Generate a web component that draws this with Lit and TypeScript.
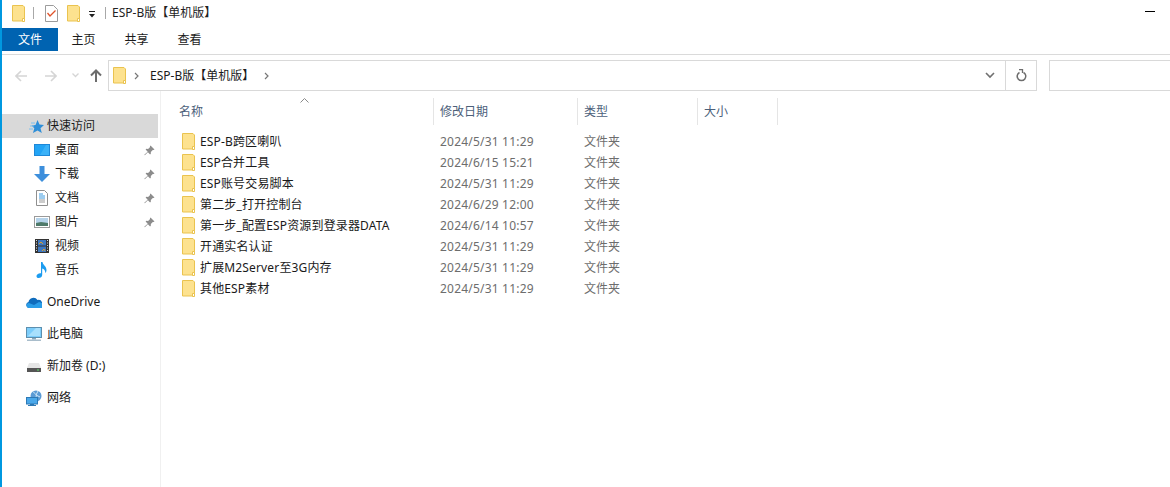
import { LitElement, html, css, svg } from "lit";
import { customElement } from "lit/decorators.js";

const folder = () => html`<svg class="ic" width="13" height="17" viewBox="0 0 13 17"><path d="M.5.5h10.500l1.500 1.500v14H.5z" fill="#fde28f" stroke="#eac34f"/><path d="M10.500 16.500v-3h2v3z" fill="#fff" stroke="#eac34f"/></svg>`;
const pin = html`<svg width="11" height="11" viewBox="0 0 11 11"><path d="M6.500.5l4 4-1 .6-.7-.2-2 2 .1 1.700-.8.800-2.200-2.200L.8 10.300.3 9.800l3.400-3.100-2.100-2.100.8-.8 1.700.1 2-2-.2-.7z" fill="#8c8c8c"/></svg>`;

const files = [
  ["ESP-B跨区喇叭", "2024/5/31 11:29"],
  ["ESP合并工具", "2024/6/15 15:21"],
  ["ESP账号交易脚本", "2024/5/31 11:29"],
  ["第二步_打开控制台", "2024/6/29 12:00"],
  ["第一步_配置ESP资源到登录器DATA", "2024/6/14 10:57"],
  ["开通实名认证", "2024/5/31 11:29"],
  ["扩展M2Server至3G内存", "2024/5/31 11:29"],
  ["其他ESP素材", "2024/5/31 11:29"],
];

const icons: Record<string, any> = {
  star: svg`<path d="M9.500 2l2 4.500 4.500.5-3.500 3.200 1.300 4.800-4.300-2.600L5 15l1.300-4.800L3.500 7.500l4-.5z" fill="#2f8fd8"/><path d="M2 8h4M1 11h4M3 5h4" stroke="#7cc0ee"/>`,
  desk: svg`<rect x="0" y="2" width="16" height="12" fill="#1e88d8"/><rect x="1" y="3" width="14" height="10" fill="#22a4f5"/><path d="M6 13l6-10h3v10z" fill="#3bb2f8"/>`,
  down: svg`<path d="M5.500 0h5v8H16l-8 8-8-8h5.500z" fill="#3d8fdc"/>`,
  doc: svg`<path d="M2.500 .5h8l3 3v12h-11z" fill="#fff" stroke="#8f8f8f"/><path d="M5 4h4M5 6h6M5 8h6" stroke="#3a9ae0"/><path d="M5 10h6M5 12h6" stroke="#9a9a9a"/>`,
  pic: svg`<rect x=".5" y="2.500" width="15" height="11" fill="#fff" stroke="#9a9a9a"/><rect x="2" y="4" width="12" height="8" fill="#b5d3ea"/><path d="M2 9l5-1 7 1v3H2z" fill="#4f7a6a"/>`,
  vid: svg`<rect x="1" y="1" width="14" height="14" fill="#333"/><rect x="4" y="2" width="8" height="5.500" fill="#3f78c0"/><rect x="4" y="8.500" width="8" height="5.500" fill="#3f78c0"/><path d="M5 6l2-2 2 2M8 13l2-2 1 2" stroke="#d8a030" fill="none"/><path d="M2 2.500h1M2 5h1M2 7.500h1M2 10h1M2 12.500h1M13 2.500h1M13 5h1M13 7.500h1M13 10h1M13 12.500h1" stroke="#ddd"/>`,
  music: svg`<path d="M7 0h1.500c.3 3 4 4 4 8 0 1.500-.6 2.500-1.300 3 .3-2.500-1.200-4-3-4.500V13c0 1.800-1.700 3-3.500 3-1.500 0-2.200-.8-2.200-1.800C2.500 12.500 4.500 11 7 11.300z" fill="#1c9cf0"/>`,
  cloud: svg`<path d="M3 14a3 3 0 0 1-.5-5.900A5 5 0 0 1 11.500 6a3.800 3.800 0 0 1 4.500 2.300A3 3 0 0 1 16 14z" fill="#0f6cbd"/><path d="M3 14a2.500 2.500 0 0 1 0-5l5 2 5-3 3 1a3 3 0 0 1 0 5z" fill="#2a9de8"/>`,
  pc: svg`<rect x=".5" y="1.500" width="15" height="10" fill="#7ccdfb" stroke="#5d8fae"/><path d="M2 10l8-8h4v8z" fill="#a8e0fd"/><rect x="6" y="12" width="4" height="1.500" fill="#8aa8bc"/><rect x="1" y="13.500" width="14" height="1.500" fill="#a9bdcb"/>`,
  disk: svg`<path d="M3 5h10l2 5H1z" fill="#e6e6e6"/><rect x="1" y="10" width="14" height="4" fill="#555"/><rect x="11" y="11.500" width="2" height="1" fill="#5fe06a"/>`,
  net: svg`<circle cx="10" cy="6" r="5.500" fill="#5b9bd5"/><path d="M7 2c2 1 4 3 3 5M12 1l-2 4 4 2" stroke="#cfe6f6" fill="none"/><rect x=".5" y="7.500" width="11" height="6.500" fill="#4aa8ea" stroke="#2d79b5"/><rect x="4" y="14" width="4" height="1" fill="#2d79b5"/><rect x="2" y="15" width="8" height="1" fill="#2d79b5"/>`,
};
const nav = (k: string) => html`<svg class="nic" width="16" height="16" viewBox="0 0 16 16">${icons[k]}</svg>`;

@customElement("app-root")
export class AppRoot extends LitElement {
  static styles = css`
    :host {
      display: flex;
      flex-direction: column;
      height: 487px;
      width: 1170px;
      box-sizing: border-box;
      border-left: 2px solid #0098e0;
      background: #fff;
      overflow: hidden;
      font: 12px/16px "Noto Sans", "Noto Sans CJK SC", sans-serif;
      color: #1a1a1a;
    }
    svg { display: block; flex: none; }
    .title { height: 27px; display: flex; align-items: center; padding: 0 15px 1px 10px; box-sizing: border-box; }
    .vsep { width: 1px; height: 12px; background: #a8a8a8; }
    .vsep.a { margin: 0 11px 0 8px; }
    .chk { margin-right: 9px; }
    .qa { margin: 3px 9px 0 8px; }
    .title .t { margin-left: 6px; color: #222; }
    .min { margin-left: auto; width: 10px; height: 1px; background: #000; margin-top: -3px; }
    .tabs { display: flex; height: 24px; border-bottom: 1px solid #dadada; padding-bottom: 3px; }
    .tab { width: 53px; height: 23px; display: flex; align-items: center; justify-content: center; margin-top: 1px; padding-right: 2px; box-sizing: border-box; }
    .tab.file { width: 56px; padding-right: 0; background: #0063b1; color: #fff; }
    .addr { display: flex; align-items: center; height: 31px; margin-top: 5px; padding-left: 106px; position: relative; }
    .navbtns { position: absolute; left: 13px; top: 0; bottom: 0; display: flex; align-items: center; }
    .fwd { margin-left: 18px; }
    .dn { margin-left: 15px; }
    .up { margin-left: 11px; }
    .box { flex: none; width: 929px; height: 31px; box-sizing: border-box; border: 1px solid #d9d9d9; display: flex; align-items: center; }
    .crumb { margin-left: 4px; display: flex; align-items: center; flex: 1; }
    .c1 { margin: 0 8px; }
    .c2 { margin-left: 10px; }
    .crumb span { margin-left: 3px; }
    .drop { width: 28px; padding-right: 2px; box-sizing: border-box; display: flex; justify-content: center; }
    .ref { width: 31px; height: 29px; border-left: 1px solid #d9d9d9; display: flex; align-items: center; justify-content: center; box-sizing: border-box; }
    .search { flex: none; width: 130px; height: 31px; margin-left: 12px; box-sizing: border-box; border: 1px solid #d9d9d9; border-right: none; }
    .main { flex: 1; display: flex; min-height: 0; }
    .side { width: 159px; border-right: 1px solid #f0f0f0; padding-top: 23px; box-sizing: border-box; flex: none; }
    .row { height: 24px; display: flex; align-items: center; position: relative; box-sizing: border-box; }
    .row.sel { background: #d9d9d9; width: 156px; }
    .row.top { padding-left: 26px; }
    .row.sub { padding-left: 32px; }
    .row .nic { margin-right: 5px; }
    .row.top .nic { margin-right: 3px; }
    .row.wide { padding-left: 24px; }
    .row.wide .nic { margin-right: 5px; }
    .pin { position: absolute; left: 142px; top: 7px; }
    .gap { height: 8px; }
    .list { flex: 1; padding-left: 13px; padding-top: 7px; position: relative; }
    .sort { position: absolute; left: 139px; top: 7px; }
    .head { display: grid; grid-template-columns: 260px 144px 120px 80px; height: 28px; color: #4c607a; }
    .head div { border-right: 1px solid #e5e5e5; padding-left: 5px; display: flex; align-items: center; height: 27px; }
    .head div + div { padding-left: 6px; }
    .rows { padding-top: 5px; }
    .f { display: grid; grid-template-columns: 260px 144px 120px; height: 21px; align-items: center; }
    .n { display: flex; align-items: center; padding-left: 8px; gap: 5px; color: #1a1a1a; white-space: nowrap; letter-spacing: .15px; }
    .d, .k { padding-left: 6px; color: #6d6d6d; }
    .d { letter-spacing: .2px; }
  `;

  render() {
    return html`
      <div class="title">
        ${folder()}
        <div class="vsep a"></div>
        <svg class="chk" width="13" height="17" viewBox="0 0 13 17"><path d="M.5.5h8l4 4v12H.5z" fill="#fff" stroke="#9c9c9c"/><path d="M2.500 8l2.500 3L10.500 5.500" fill="none" stroke="#e0532a" stroke-width="1.300"/></svg>
        ${folder()}
        <svg class="qa" width="8" height="7" viewBox="0 0 8 7"><path d="M1 .5h6" stroke="#222"/><path d="M1 3h6L4 6.500z" fill="#222"/></svg>
        <div class="vsep"></div>
        <span class="t">ESP-B版【单机版】</span>
        <div class="min"></div>
      </div>
      <div class="tabs">
        <div class="tab file">文件</div>
        <div class="tab">主页</div>
        <div class="tab">共享</div>
        <div class="tab">查看</div>
      </div>
      <div class="addr">
        <div class="navbtns">
          <svg width="12" height="12" viewBox="0 0 12 12"><path d="M12 6H1.500M6 1L1 6l5 5" fill="none" stroke="#d5d5d5" stroke-width="1.600"/></svg>
          <svg class="fwd" width="12" height="12" viewBox="0 0 12 12"><path d="M0 6h10.500M6 1l5 5-5 5" fill="none" stroke="#d5d5d5" stroke-width="1.600"/></svg>
          <svg class="dn" width="7" height="5" viewBox="0 0 7 5"><path d="M.5.5l3 3 3-3" fill="none" stroke="#d5d5d5" stroke-width="1.300"/></svg>
          <svg class="up" width="12" height="13" viewBox="0 0 12 13"><path d="M6 13V2M1 6.500L6 1.500l5 5" fill="none" stroke="#6d6d6d" stroke-width="2"/></svg>
        </div>
        <div class="box">
          <div class="crumb">
            ${folder()}
            <svg class="c1" width="5" height="8" viewBox="0 0 5 8"><path d="M1 1l3 3-3 3" fill="none" stroke="#777" stroke-width="1.200"/></svg>
            <span>ESP-B版【单机版】</span>
            <svg class="c2" width="5" height="8" viewBox="0 0 5 8"><path d="M1 1l3 3-3 3" fill="none" stroke="#777" stroke-width="1.200"/></svg>
          </div>
          <div class="drop"><svg width="10" height="7" viewBox="0 0 10 7"><path d="M1 1l4 4 4-4" fill="none" stroke="#707070" stroke-width="1.600"/></svg></div>
          <div class="ref"><svg width="11" height="13" viewBox="0 0 11 13"><path d="M3.500 3.500a4.300 4.300 0 1 0 4 0" fill="none" stroke="#6d6d6d" stroke-width="1.500"/><path d="M3 .5h3.500V4" fill="none" stroke="#6d6d6d" stroke-width="1.300"/></svg></div>
        </div>
        <div class="search"></div>
      </div>
      <div class="main">
        <div class="side">
          <div class="row top sel">${nav("star")}<span>快速访问</span></div>
          <div class="row sub">${nav("desk")}<span>桌面</span><span class="pin">${pin}</span></div>
          <div class="row sub">${nav("down")}<span>下载</span><span class="pin">${pin}</span></div>
          <div class="row sub">${nav("doc")}<span>文档</span><span class="pin">${pin}</span></div>
          <div class="row sub">${nav("pic")}<span>图片</span><span class="pin">${pin}</span></div>
          <div class="row sub">${nav("vid")}<span>视频</span></div>
          <div class="row sub">${nav("music")}<span>音乐</span></div>
          <div class="gap"></div>
          <div class="row top wide">${nav("cloud")}<span>OneDrive</span></div>
          <div class="gap"></div>
          <div class="row top wide">${nav("pc")}<span>此电脑</span></div>
          <div class="gap"></div>
          <div class="row top wide">${nav("disk")}<span>新加卷 (D:)</span></div>
          <div class="gap"></div>
          <div class="row top wide">${nav("net")}<span>网络</span></div>
        </div>
        <div class="list">
          <svg class="sort" width="9" height="5" viewBox="0 0 9 5"><path d="M.5 4.500l4-4 4 4" fill="none" stroke="#8a8a8a"/></svg>
          <div class="head"><div>名称</div><div>修改日期</div><div>类型</div><div>大小</div></div>
          <div class="rows">
            ${files.map(([n, d]) => html`<div class="f"><div class="n">${folder()}<span>${n}</span></div><div class="d">${d}</div><div class="k">文件夹</div></div>`)}
          </div>
        </div>
      </div>
    `;
  }
}
